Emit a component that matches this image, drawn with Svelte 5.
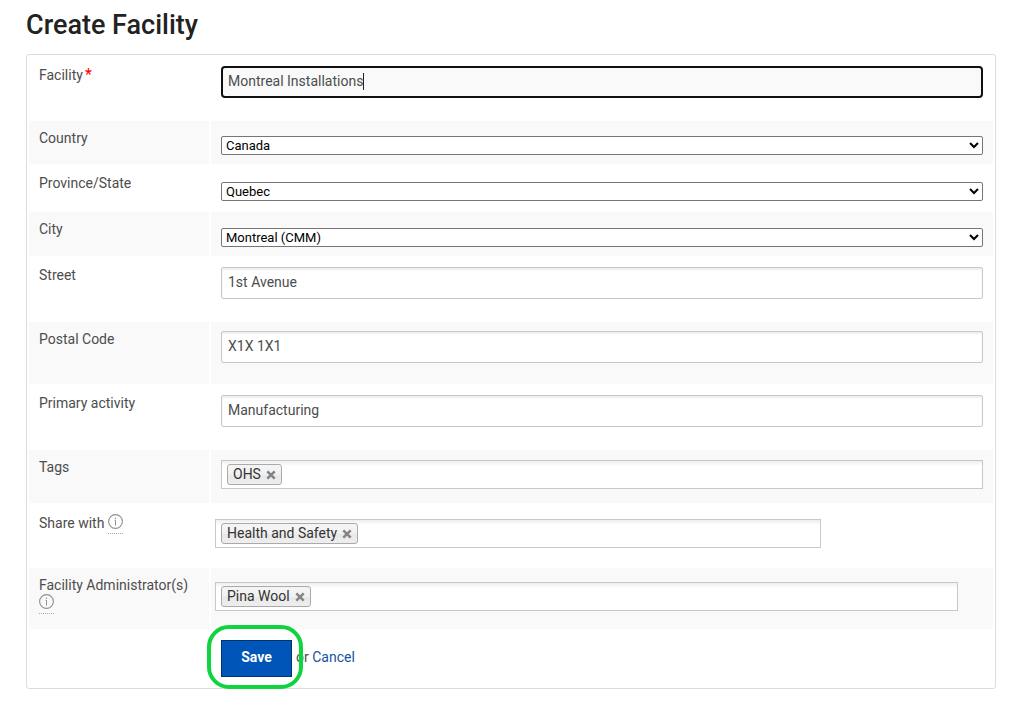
<script>
  let name = $state('Montreal Installations');
  let street = $state('1st Avenue');
  let postalCode = $state('X1X 1X1');
  let activity = $state('Manufacturing');
  let tags = $state(['OHS']);
  let shares = $state(['Health and Safety']);
  let admins = $state(['Pina Wool']);
</script>

{#snippet info(label)}
  <button type="button" class="info" aria-label={label}>
    <svg viewBox="0 0 15 15" width="15" height="15" aria-hidden="true">
      <circle cx="7.5" cy="7.5" r="6.9" fill="none" stroke="#8f8f8f" stroke-width="1.1" />
      <path d="M6.6 6.2H7.5V11.6" fill="none" stroke="#8f8f8f" stroke-width="1" />
      <path d="M7.5 3.6V4.8" stroke="#8f8f8f" stroke-width="1.2" />
    </svg>
  </button>
{/snippet}

{#snippet chips(items, remove, id)}
  {#each items as item}
    <span class="chip">
      {item}
      <button type="button" aria-label={`Remove ${item}`} onclick={() => remove(item)}>
        <svg viewBox="0 0 10 10" width="10" height="10" aria-hidden="true">
          <path d="M1.3 1.3L8.7 8.7M8.7 1.3L1.3 8.7" stroke="#848484" stroke-width="2.5" />
        </svg>
      </button>
    </span>
  {/each}
  <input {id} type="text" />
{/snippet}

<main>
  <h1>Create Facility</h1>

  <form onsubmit={(e) => e.preventDefault()}>
    <div class="row tall">
      <div class="label lowered"><label for="name">Facility<span class="required">*</span></label></div>
      <div class="field focused">
        <input class="text" id="name" type="text" bind:value={name} required />
        <span class="caret"></span>
      </div>
    </div>
    <div class="row short">
      <div class="label"><label for="country">Country</label></div>
      <div class="field"><select id="country"><option>Canada</option></select></div>
    </div>
    <div class="row short">
      <div class="label"><label for="province">Province/State</label></div>
      <div class="field"><select id="province"><option>Quebec</option></select></div>
    </div>
    <div class="row short">
      <div class="label"><label for="city">City</label></div>
      <div class="field"><select id="city"><option>Montreal (CMM)</option></select></div>
    </div>
    <div class="row tall">
      <div class="label"><label for="street">Street</label></div>
      <div class="field"><input class="text" id="street" type="text" bind:value={street} /></div>
    </div>
    <div class="row tall">
      <div class="label"><label for="postal">Postal Code</label></div>
      <div class="field"><input class="text" id="postal" type="text" bind:value={postalCode} /></div>
    </div>
    <div class="row tall">
      <div class="label"><label for="activity">Primary activity</label></div>
      <div class="field"><input class="text" id="activity" type="text" bind:value={activity} /></div>
    </div>
    <div class="row tags">
      <div class="label"><label for="tags">Tags</label></div>
      <div class="field">
        <div class="picker">
          {@render chips(tags, (t) => (tags = tags.filter((x) => x !== t)), 'tags')}
        </div>
      </div>
    </div>
    <div class="row people">
      <div class="label lowered">
        <label for="share">Share with</label>
        {@render info('About sharing')}
      </div>
      <div class="field">
        <div class="picker outset medium">
          {@render chips(shares, (t) => (shares = shares.filter((x) => x !== t)), 'share')}
        </div>
      </div>
    </div>
    <div class="row people">
      <div class="label">
        <label for="admins">Facility Administrator(s)</label>
        {@render info('About facility administrators')}
      </div>
      <div class="field">
        <div class="picker outset wide">
          {@render chips(admins, (t) => (admins = admins.filter((x) => x !== t)), 'admins')}
        </div>
      </div>
    </div>
    <div class="row actions">
      <div class="label"></div>
      <div class="field">
        <span class="highlight"><button type="submit" class="save">Save</button></span>
        <span class="or">or <a href="#cancel">Cancel</a></span>
      </div>
    </div>
  </form>
</main>

<style>
  :global(body) {
    background: #fff;
  }

  main {
    padding: 8px 18px 13px 26px;
    font: 14px/18px Roboto, sans-serif;
    color: #4d4d4d;
  }

  h1 {
    margin: 0 0 12px;
    font-size: 27px;
    line-height: 34px;
    font-weight: 500;
    color: #222;
  }

  form {
    display: grid;
    gap: 2px;
    padding: 2px;
    border: 1px solid #dcdcdc;
    border-radius: 3px;
  }

  .row {
    display: grid;
    grid-template-columns: 180px 1fr;
    gap: 2px;
  }

  .row:nth-child(even) > div {
    background: #f9f9f9;
  }

  .tall {
    min-height: 62px;
  }

  .short {
    min-height: 44px;
  }

  .short:nth-child(2) {
    min-height: 43px;
  }

  .tags {
    min-height: 53px;
  }

  .people {
    min-height: 61px;
  }

  .actions {
    min-height: 55px;
  }

  .label {
    padding: 8px 10px 0;
  }

  .lowered {
    padding-top: 9px;
  }

  .required {
    margin-left: 2px;
    font-size: 16px;
    line-height: 16px;
    color: #f00;
  }

  .field {
    padding: 9px 10px 0;
  }

  .short .field {
    padding-top: 16px;
  }

  .short:nth-child(2) .field {
    padding-top: 15px;
  }

  .tags .field {
    padding-top: 10px;
  }

  .people .field {
    padding-top: 14px;
  }

  .text {
    display: block;
    box-sizing: border-box;
    width: 100%;
    height: 32px;
    padding: 0 6px 2px;
    border: 1px solid #c8c8c8;
    border-radius: 2px;
    background: #fff;
    box-shadow: inset 0 2px 2px #eee;
    font: inherit;
    color: inherit;
  }

  .focused {
    position: relative;
  }

  .focused .text {
    padding: 0 5px 2px;
    border: 2px solid #101010;
    border-radius: 4px;
    background: #f9f9f9;
    box-shadow: none;
    outline: none;
  }

  .caret {
    position: absolute;
    top: 16px;
    left: 152px;
    width: 1px;
    height: 17px;
    background: #222;
  }

  select {
    display: block;
    box-sizing: border-box;
    width: 100%;
    height: 19px;
    padding: 0;
    border: 1px solid #767676;
    border-radius: 2px;
    background-color: #fff;
    font: 13px Roboto, sans-serif;
    color: #000;
  }

  .picker {
    display: flex;
    align-items: center;
    box-sizing: border-box;
    height: 29px;
    padding: 0 5px;
    border: 1px solid #c8c8c8;
    background: linear-gradient(#eee, #fff 5px);
  }

  .picker input {
    flex: 1;
    min-width: 0;
    padding: 0;
    border: 0;
    outline: none;
    background: none;
    font: inherit;
  }

  .outset {
    margin-left: -6px;
  }

  .medium {
    width: calc(80% - 4px);
  }

  .wide {
    width: calc(100% - 19px);
  }

  .chip {
    display: flex;
    align-items: flex-start;
    gap: 5px;
    box-sizing: border-box;
    height: 21px;
    padding: 0 5px;
    border: 1px solid #aaa;
    border-radius: 3px;
    background: linear-gradient(#f4f4f4 20%, #f0f0f0 50%, #e8e8e8 52%, #eee);
    color: #333;
  }

  .chip button {
    display: flex;
    padding: 5px 0 0;
    border: 0;
    background: none;
  }

  .info {
    display: inline-block;
    height: 20px;
    padding: 0;
    border: 0;
    border-bottom: 1px dotted #aaa;
    background: none;
    vertical-align: -5px;
  }

  .info svg {
    display: block;
    margin-bottom: 4px;
  }

  .actions .field {
    display: flex;
    align-items: flex-start;
    gap: 4px;
  }

  .highlight {
    position: relative;
  }

  .highlight::after {
    content: '';
    position: absolute;
    inset: -15px -11px -12px -14px;
    border: 4px solid #0fd43f;
    border-radius: 22px;
    pointer-events: none;
  }

  .save {
    display: block;
    box-sizing: border-box;
    min-width: 71px;
    height: 37px;
    padding: 0 19px 3px;
    border: 1px solid #00336f;
    background: #0055b8;
    font: 700 14px Roboto, sans-serif;
    color: #fff;
  }

  .or {
    padding-top: 8px;
  }

  a {
    color: #1453a3;
    text-decoration: none;
  }
</style>
